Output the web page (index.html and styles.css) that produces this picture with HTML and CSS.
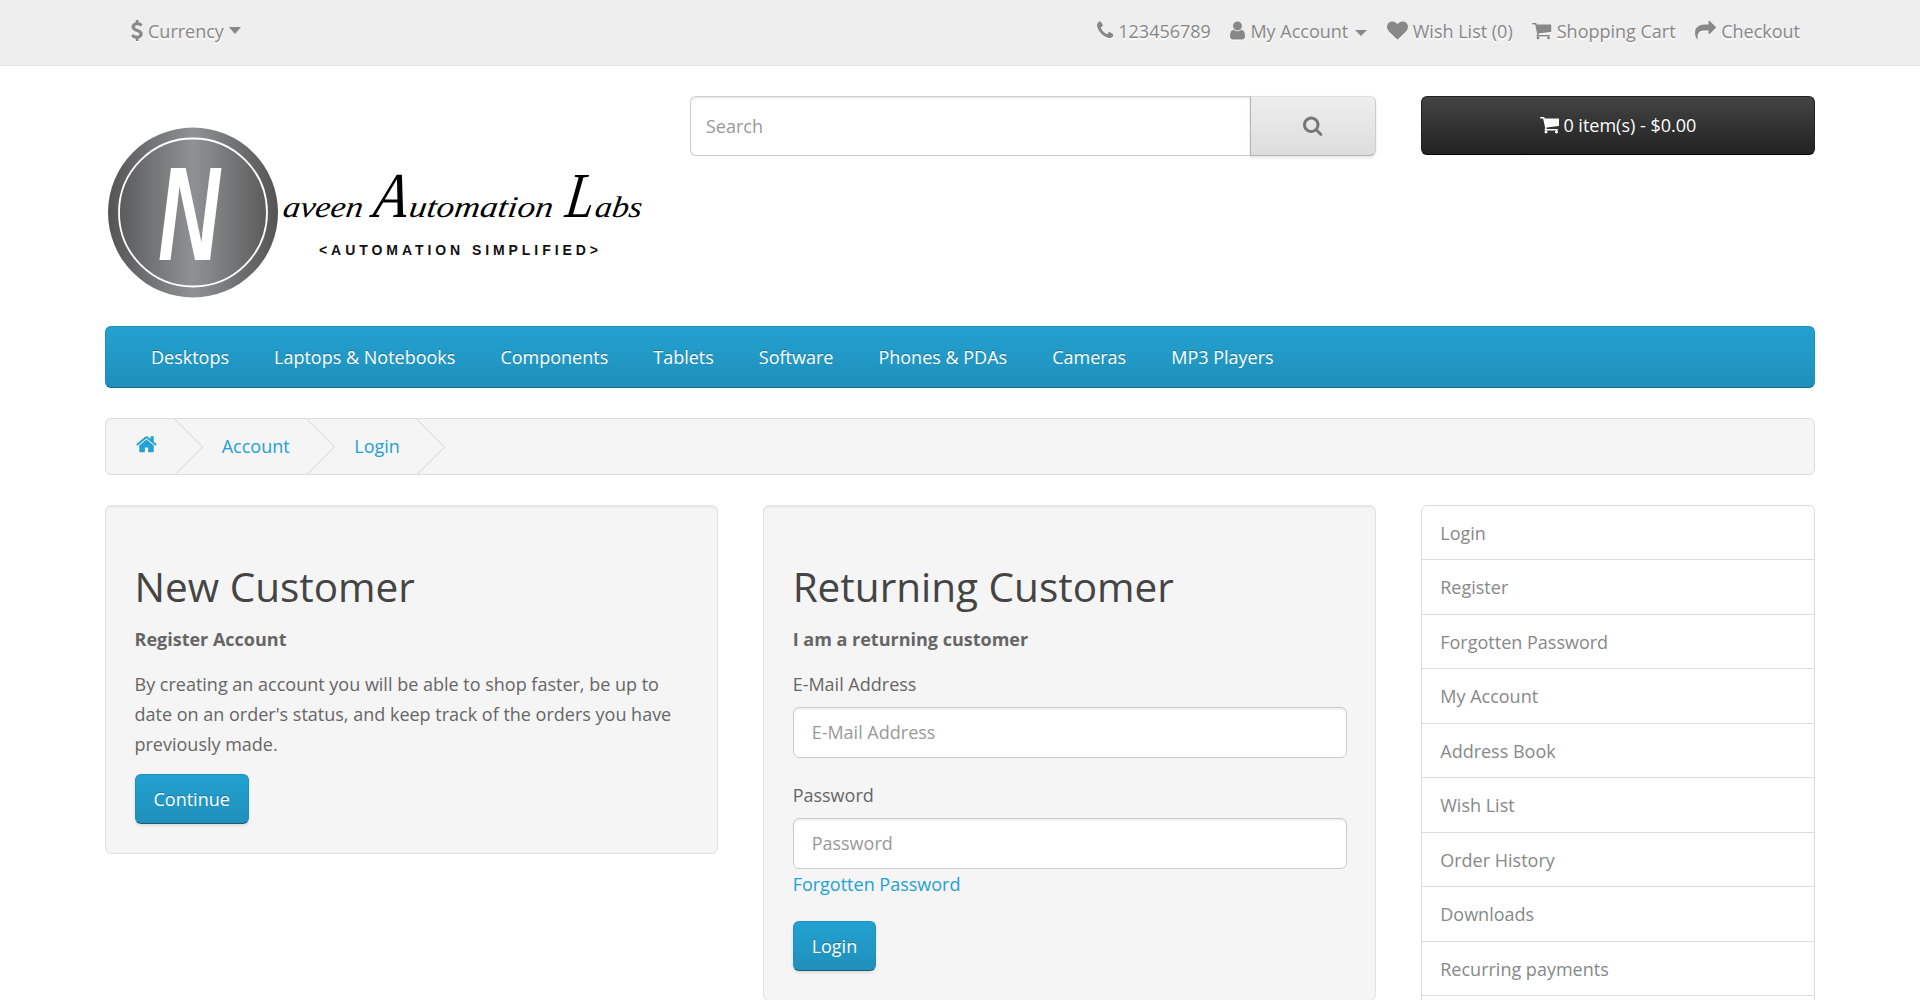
FILE: index.html
```html
<!DOCTYPE html>
<html lang="en">
  <head>
    <meta charset="UTF-8" />
    <meta name="viewport" content="width=device-width, initial-scale=1.0" />
    <title>Account Login</title>
    <link rel="stylesheet" href="styles.css">
  </head>
  <body>
    <!-- Icon sprite -->
    <svg class="sprite" aria-hidden="true">
      <symbol id="i-usd" viewBox="384 0 1024 1792"><path d="M1362 1185q0 153-99.5 263.5t-258.5 136.5v175q0 14-9 23t-23 9h-135q-13 0-22.5-9.5t-9.5-22.5v-175q-66-9-127.5-31t-101.5-44.5-74-48-46.5-37.5-17.5-18q-17-21-2-41l103-135q7-10 23-12 15-2 24 9l2 2q113 99 243 125 37 8 74 8 81 0 142.5-43t61.5-122q0-28-15-53t-33.5-42-58.5-37.5-66-32-80-32.5q-39-16-61.5-25t-61.5-26.5-62.5-31-56.5-35.5-53.5-42.5-43.5-49-35.5-58-21-66.5-8.5-78q0-138 98-242t255-134v-180q0-13 9.5-22.5t22.5-9.5h135q14 0 23 9t9 23v176q57 6 110.5 23t87 33.5 63.5 37.5 39 29 15 14q17 18 5 38l-81 146q-8 15-23 16-14 3-27-7-3-3-14.5-12t-39-26.5-58.5-32-74.5-26-85.5-11.5q-95 0-155 43t-60 111q0 26 8.5 48t29.5 41.5 39.5 33 56 31 60.5 27 70 27.5q53 20 81 31.5t76 35 75.5 42.5 62 50 53 63.5 31.5 76.5 13 94z"/></symbol>
      <symbol id="i-phone" viewBox="192 0 1408 1792"><path d="M1600 1240q0 27-10 70.5t-21 68.5q-21 50-122 106-94 51-186 51-27 0-53-3.5t-57.5-12.5-47-14.5-55.5-20.5-49-18q-98-35-175-83-127-79-264-216t-216-264q-48-77-83-175-3-9-18-49t-20.5-55.5-14.5-47-12.5-57.5-3.5-53q0-92 51-186 56-101 106-122 25-11 68.5-21t70.5-10q14 0 21 3 18 6 53 76 11 19 30 54t35 63.5 31 53.5q3 4 17.5 25t21.5 35.5 7 28.5q0 20-28.5 50t-62 55-62 53-28.5 46q0 9 5 22.5t8.5 20.5 14 24 11.5 19q76 137 174 235t235 174q2 1 19 11.5t24 14 20.5 8.5 22.5 5q18 0 46-28.5t53-62 55-62 50-28.5q14 0 28.5 7t35.5 21.5 25 17.5q25 15 53.5 31t63.5 35 54 30q70 35 76 53 3 7 3 21z"/></symbol>
      <symbol id="i-user" viewBox="256 0 1280 1792"><path d="M1536 1399q0 109-62.5 187t-150.5 78h-854q-88 0-150.5-78t-62.5-187q0-85 8.5-160.5t31.5-152 58.5-131 94-89 134.5-34.5q131 128 313 128t313-128q76 0 134.5 34.5t94 89 58.5 131 31.5 152 8.5 160.5zm-256-887q0 159-112.5 271.5t-271.5 112.5-271.5-112.5-112.5-271.5 112.5-271.5 271.5-112.5 271.5 112.5 112.5 271.5z"/></symbol>
      <symbol id="i-heart" viewBox="0 0 1792 1792"><path d="M896 1664q-26 0-44-18l-624-602q-10-8-27.5-26t-55.5-65.5-68-97.5-53.5-121-23.5-138q0-220 127-344t351-124q62 0 126.5 21.5t120 58 95.5 68.5 76 68q36-36 76-68t95.5-68.5 120-58 126.5-21.5q224 0 351 124t127 344q0 221-229 450l-623 600q-18 18-44 18z"/></symbol>
      <symbol id="i-cart" viewBox="64 0 1664 1792"><path d="M704 1536q0 52-38 90t-90 38-90-38-38-90 38-90 90-38 90 38 38 90zm896 0q0 52-38 90t-90 38-90-38-38-90 38-90 90-38 90 38 38 90zm128-1088v512q0 24-16.5 42.5t-40.5 21.5l-1044 122q13 60 13 70 0 16-24 64h920q26 0 45 19t19 45-19 45-45 19h-1024q-26 0-45-19t-19-45q0-11 8-31.5t16-36 21.5-40 15.5-29.5l-177-823h-204q-26 0-45-19t-19-45 19-45 45-19h256q16 0 28.5 6.5t19.5 15.5 13 24.5 8 26 5.5 29.5 4.5 26h1201q26 0 45 19t19 45z"/></symbol>
      <symbol id="i-share" viewBox="0 0 1792 1792"><path d="M1792 640q0 26-19 45l-512 512q-19 19-45 19t-45-19-19-45v-256h-224q-98 0-175.5 6t-154 21.5-133 42.5-105.5 69.5-80 101-48.5 138.5-17.5 181q0 55 5 123 0 6 2.5 23.5t2.5 26.5q0 15-8.5 25t-23.5 10q-16 0-28-17-7-9-13-22t-13.5-30-10.5-24q-127-285-127-451 0-199 53-333 162-403 875-403h224v-256q0-26 19-45t45-19 45 19l512 512q19 19 19 45z"/></symbol>
      <symbol id="i-search" viewBox="64 0 1664 1792"><path d="M1216 832q0-185-131.5-316.5t-316.5-131.5-316.5 131.5-131.5 316.5 131.5 316.5 316.5 131.5 316.5-131.5 131.5-316.5zm512 832q0 52-38 90t-90 38q-54 0-90-38l-343-342q-179 124-399 124-143 0-273.5-55.5t-225-150-150-225-55.5-273.5 55.5-273.5 150-225 225-150 273.5-55.5 273.5 55.5 225 150 150 225 55.5 273.5q0 220-124 399l343 343q37 37 37 90z"/></symbol>
      <symbol id="i-home" viewBox="64 0 1664 1792"><path d="M1472 992v480q0 26-19 45t-45 19h-384v-384h-256v384h-384q-26 0-45-19t-19-45v-480q0-1 .5-3t.5-3l575-474 575 474q1 2 1 6zm223-69l-62 74q-8 9-21 11h-3q-13 0-21-7l-692-577-692 577q-12 8-24 7-13-2-21-11l-62-74q-8-10-7-23.5t11-21.5l719-599q32-26 76-26t76 26l244 204v-195q0-14 9-23t23-9h192q14 0 23 9t9 23v408l219 182q10 8 11 21.5t-7 23.5z"/></symbol>
    </svg>

    <nav class="top-bar">
      <div class="container top-inner">
        <a class="currency" href="#">
          <svg class="icon icon-usd"><use href="#i-usd"/></svg>
          <span>Currency</span>
          <span class="caret-big"></span>
        </a>
        <ul class="top-links">
          <li><svg class="icon icon-phone"><use href="#i-phone"/></svg>123456789</li>
          <li><svg class="icon icon-user"><use href="#i-user"/></svg>My Account<span class="caret-small"></span></li>
          <li><svg class="icon icon-heart"><use href="#i-heart"/></svg>Wish List (0)</li>
          <li><svg class="icon icon-cart"><use href="#i-cart"/></svg>Shopping Cart</li>
          <li><svg class="icon icon-share"><use href="#i-share"/></svg>Checkout</li>
        </ul>
      </div>
    </nav>

    <header class="container site-header">
      <a class="logo" href="#">
        <svg width="540" height="200" viewBox="0 0 540 200" role="img" aria-label="Naveen Automation Labs">
          <defs>
            <linearGradient id="steel" x1="0" x2="1" y1="0" y2="0">
              <stop offset="0" stop-color="#545454"/>
              <stop offset="0.5" stop-color="#909194"/>
              <stop offset="1" stop-color="#545454"/>
            </linearGradient>
          </defs>
          <circle cx="88" cy="116.5" r="85" fill="url(#steel)"/>
          <circle cx="88" cy="116.5" r="74" fill="none" stroke="#fff" stroke-width="1.8"/>
          <text class="logo-n" x="53" y="164" textLength="62" lengthAdjust="spacingAndGlyphs">N</text>
          <g transform="translate(17 0) skewX(-8)">
            <text class="logo-script" x="177" y="121" textLength="80" lengthAdjust="spacingAndGlyphs">aveen</text>
            <text class="logo-script logo-cap" x="267" y="121" textLength="34" lengthAdjust="spacingAndGlyphs">A</text>
            <text class="logo-script" x="303" y="121" textLength="144" lengthAdjust="spacingAndGlyphs">utomation</text>
            <text class="logo-script logo-cap" x="459" y="121" textLength="28" lengthAdjust="spacingAndGlyphs">L</text>
            <text class="logo-script" x="489" y="121" textLength="47" lengthAdjust="spacingAndGlyphs">abs</text>
          </g>
          <text class="logo-tag" x="214" y="159" textLength="279">&lt;AUTOMATION SIMPLIFIED&gt;</text>
        </svg>
      </a>
      <form class="search">
        <input type="text" placeholder="Search" />
        <button type="button"><svg class="icon icon-search"><use href="#i-search"/></svg></button>
      </form>
      <button class="cart-btn" type="button"><svg class="icon icon-cart"><use href="#i-cart"/></svg>0 item(s) - $0.00</button>
    </header>

    <div class="container">
      <ul class="menu">
        <li>Desktops</li>
        <li>Laptops &amp; Notebooks</li>
        <li>Components</li>
        <li>Tablets</li>
        <li>Software</li>
        <li>Phones &amp; PDAs</li>
        <li>Cameras</li>
        <li>MP3 Players</li>
      </ul>

      <ul class="breadcrumb">
        <li><a href="#"><svg class="icon icon-home"><use href="#i-home"/></svg></a></li>
        <li><a href="#">Account</a></li>
        <li><a href="#">Login</a></li>
      </ul>

      <div class="page-row">
        <main class="panels">
          <section class="well">
            <h2>New Customer</h2>
            <p><strong>Register Account</strong></p>
            <p>By creating an account you will be able to shop faster, be up to date on an order's status, and keep track of the orders you have previously made.</p>
            <a class="btn" href="#">Continue</a>
          </section>
          <section class="well">
            <h2>Returning Customer</h2>
            <p><strong>I am a returning customer</strong></p>
            <form>
              <div class="form-group">
                <label for="email">E-Mail Address</label>
                <input id="email" type="text" placeholder="E-Mail Address" />
              </div>
              <div class="form-group">
                <label for="password">Password</label>
                <input id="password" type="password" placeholder="Password" />
                <a class="forgot" href="#">Forgotten Password</a>
              </div>
              <a class="btn" href="#">Login</a>
            </form>
          </section>
        </main>
        <aside class="side-list">
          <a href="#">Login</a>
          <a href="#">Register</a>
          <a href="#">Forgotten Password</a>
          <a href="#">My Account</a>
          <a href="#">Address Book</a>
          <a href="#">Wish List</a>
          <a href="#">Order History</a>
          <a href="#">Downloads</a>
          <a href="#">Recurring payments</a>
          <a href="#">Reward Points</a>
        </aside>
      </div>
    </div>
  </body>
</html>
```

FILE: styles.css
```css
* {
  box-sizing: border-box;
}
html {
  overflow: hidden;
}
body {
  margin: 0;
  font-family: "Open Sans", sans-serif;
  font-size: 18px;
  line-height: 30px;
  color: #666;
  background-color: #fff;
}
a {
  color: #23a1d1;
  text-decoration: none;
}
ul {
  list-style: none;
  margin: 0;
  padding: 0;
}
.sprite {
  display: none;
}
.icon {
  display: inline-block;
  height: 21px;
  fill: currentColor;
  vertical-align: -3px;
}
.icon-usd {
  width: 12px;
  stroke: currentColor;
  stroke-width: 40;
}
.icon-phone { width: 16.5px; }
.icon-user { width: 15px; }
.icon-heart { width: 21px; }
.icon-cart { width: 19.5px; }
.icon-share { width: 21px; }
.icon-search { width: 19.5px; }
.icon-home {
  width: 21px;
  height: 22.5px;
  margin-left: -1.5px;
}

.container {
  width: 1755px;
  margin: 0 auto;
  padding: 0 22.5px;
}

/* Top bar */
.top-bar {
  height: 65.5px;
  background-color: #eee;
  border-bottom: 1px solid #e2e2e2;
  color: #888;
  text-shadow: 0 1.5px 0 #fff;
}
.top-bar .icon {
  filter: drop-shadow(0 1px 0 #fff);
}
.top-inner {
  display: flex;
  justify-content: space-between;
  align-items: center;
  height: 64px;
  padding-bottom: 3px;
}
.currency {
  display: flex;
  align-items: center;
  gap: 5px;
  padding-left: 26px;
  color: #888;
}
.caret-big {
  width: 0;
  height: 0;
  border-left: 6.5px solid transparent;
  border-right: 6.5px solid transparent;
  border-top: 7.5px solid #888;
}
.caret-small {
  display: inline-block;
  margin-left: 7px;
  width: 0;
  height: 0;
  vertical-align: middle;
  border-left: 6px solid transparent;
  border-right: 6px solid transparent;
  border-top: 6px solid #888;
}
.top-links {
  display: flex;
  gap: 19.5px;
  padding-right: 15px;
}
.top-links .icon {
  margin-right: 5px;
}

/* Logo, search, cart */
.site-header {
  display: grid;
  grid-template-columns: 540px 686.25px 393.75px;
  gap: 45px;
  align-items: start;
  margin-top: 30px;
  margin-bottom: 30px;
}
.logo {
  display: block;
  height: 200px;
}
.logo svg {
  display: block;
  overflow: visible;
}
.logo-n {
  font-family: "Liberation Sans", sans-serif;
  font-style: italic;
  font-weight: bold;
  font-size: 134px;
  fill: #fff;
}
.logo-script {
  font-family: "Liberation Serif", serif;
  font-style: italic;
  font-size: 30px;
  fill: #000;
}
.logo-cap {
  font-size: 64px;
}
.logo-tag {
  font-family: "Liberation Sans", sans-serif;
  font-weight: bold;
  font-size: 14px;
  fill: #111;
}
.search {
  display: flex;
  height: 60px;
}
.search input {
  flex: 1;
  min-width: 0;
  padding: 0 15px;
  font: inherit;
  color: #555;
  border: 1px solid #ccc;
  border-right: none;
  border-radius: 6px 0 0 6px;
  box-shadow: inset 0 1.5px 1.5px rgba(0, 0, 0, 0.075);
}
.search input::placeholder,
.form-group input::placeholder {
  color: #999;
  opacity: 1;
}
.search button {
  width: 126.5px;
  color: #777;
  background-image: linear-gradient(to bottom, #eee, #ddd);
  border: 1px solid #ccc;
  border-color: #ddd #ccc #b3b3b3 #b3b3b3;
  border-radius: 0 6px 6px 0;
  box-shadow: 0 1.5px 3px rgba(0, 0, 0, 0.1);
}
.cart-btn {
  height: 59px;
  font: inherit;
  color: #fff;
  text-shadow: 0 -1.5px 0 rgba(0, 0, 0, 0.25);
  background-image: linear-gradient(to bottom, #444, #222);
  border: 1px solid #222;
  border-bottom-color: #000;
  border-radius: 6px;
}
.cart-btn .icon {
  margin-right: 4px;
}

/* Menu */
.menu {
  display: flex;
  align-items: center;
  height: 62.5px;
  padding-left: 22.5px;
  margin-bottom: 30px;
  color: #fff;
  text-shadow: 0 -1.5px 0 rgba(0, 0, 0, 0.25);
  background-color: #229ac8;
  background-image: linear-gradient(to bottom, #23a1d1, #1f90bb);
  border: 1px solid #1f90bb;
  border-bottom-color: #1a6d8e;
  border-radius: 6px;
}
.menu li {
  padding: 0 22.5px;
}

/* Breadcrumb */
.breadcrumb {
  padding: 12px 0 12.5px 1.5px;
  margin-bottom: 30px;
  background-color: #f5f5f5;
  border: 1px solid #ddd;
  border-radius: 6px;
  overflow: hidden;
}
.breadcrumb li {
  display: inline-block;
  position: relative;
  padding: 0 30px;
  white-space: nowrap;
}
.breadcrumb li::after {
  content: "";
  display: block;
  position: absolute;
  top: -4.5px;
  right: -7.5px;
  width: 39px;
  height: 39px;
  border-right: 1px solid #ddd;
  border-bottom: 1px solid #ddd;
  transform: rotate(-45deg);
}
.breadcrumb .icon {
  vertical-align: -2px;
}

/* Main content */
.page-row {
  display: grid;
  grid-template-columns: 1271.25px 393.75px;
  gap: 45px;
  align-items: start;
}
.panels {
  display: grid;
  grid-template-columns: 1fr 1fr;
  gap: 45px;
  align-items: start;
}
.well {
  padding: 28.5px 28.5px 29px;
  background-color: #f5f5f5;
  border: 1px solid #e3e3e3;
  border-radius: 6px;
  box-shadow: inset 0 1.5px 1.5px rgba(0, 0, 0, 0.05);
}
.well h2 {
  margin: 30.5px 0 15px;
  font-size: 40.5px;
  font-weight: 400;
  line-height: 1.1;
  color: #444;
}
.well p {
  margin: 0 0 15px;
}
.form-group {
  margin-bottom: 22.5px;
}
.form-group label {
  display: block;
  margin-bottom: 7.5px;
}
.form-group input {
  display: block;
  width: 100%;
  height: 51px;
  padding: 9px 18px;
  font: inherit;
  color: #555;
  background-color: #fff;
  border: 1px solid #ccc;
  border-radius: 6px;
  box-shadow: inset 0 1.5px 1.5px rgba(0, 0, 0, 0.075);
}
.forgot {
  display: block;
}
.btn {
  display: inline-block;
  padding: 10px 18px;
  line-height: 28px;
  color: #fff;
  text-shadow: 0 -1.5px 0 rgba(0, 0, 0, 0.25);
  background-image: linear-gradient(to bottom, #23a1d1, #1f90bb);
  border: 1px solid #1f90bb;
  border-bottom-color: #145e7a;
  border-radius: 6px;
  box-shadow: 0 1.5px 3px rgba(0, 0, 0, 0.1);
}

/* Side list */
.side-list a {
  display: block;
  padding: 12px 18px;
  margin-bottom: -1.5px;
  color: #888;
  background-color: #fff;
  border: 1px solid #ddd;
}
.side-list a:first-child {
  border-radius: 6px 6px 0 0;
}
```
